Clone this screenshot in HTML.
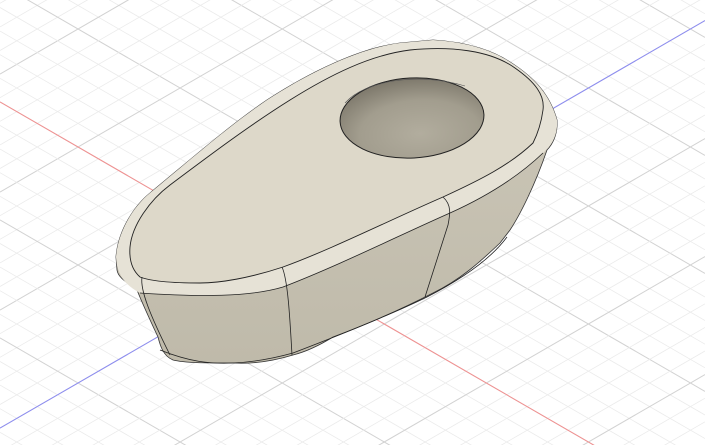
<!DOCTYPE html>
<html><head><style>html,body{margin:0;padding:0;background:#fff;width:705px;height:445px;overflow:hidden}svg{display:block}</style></head>
<body>
<svg width="705" height="445" viewBox="0 0 705 445" xmlns="http://www.w3.org/2000/svg">
<defs>
<linearGradient id="side" x1="0" y1="0" x2="0" y2="1">
<stop offset="0" stop-color="#cdc8b9"/><stop offset="1" stop-color="#bfbaaa"/></linearGradient>
<radialGradient id="hole" cx="0.55" cy="0.7" r="0.7">
<stop offset="0" stop-color="#b2ad9e"/><stop offset="0.6" stop-color="#a29d8e"/><stop offset="1" stop-color="#7d786b"/></radialGradient>
</defs>
<g id="grid"></g>
<g id="axes"></g>
<script>
(function(){
var ns='http://www.w3.org/2000/svg',k=0.578,g=document.getElementById('grid'),a=document.getElementById('axes');
function ln(p,c,sign,col,w){var l=document.createElementNS(ns,'line');
l.setAttribute('x1',0);l.setAttribute('y1',c);l.setAttribute('x2',705);l.setAttribute('y2',c+sign*k*705);
l.setAttribute('stroke',col);l.setAttribute('stroke-width',w);p.appendChild(l);}
for(var i=-40;i<60;i++){var cA=-16.1+i*23.6,cB=74.1+i*23.6;var maj=((i%5)+5)%5==0;
ln(g,cA,1,maj?'#d2d2d2':'#ebebeb',maj?1:0.8);ln(g,cB,-1,maj?'#d2d2d2':'#ebebeb',maj?1:0.8);}
ln(a,101.9,1,'#f29090',1);ln(a,428.1,-1,'#8c8cf2',1);
})();
</script>
<path d="M116,257 C118,230 135,205 150,193 C190,160 230,125 267,100 C310,72 360,48 400,43 L433,40 C470,42 495,52 510,62 C535,78 550,95 557,120 C558,135 552,145 547,150 C535,185 520,215 510,230 L500,243 C480,262 460,280 433,293 C400,310 365,325 333,337 C320,345 305,352 293,355 C270,362 250,364 233,363 C205,363 185,363 173,360 C163,356 160,345 158,337 C150,320 143,305 137,290 C128,283 118,278 117,270 Z" fill="url(#side)" stroke="#333" stroke-width="0.8"/>
<path d="M116,257 C118,230 135,205 150,193 C190,160 230,125 267,100 C310,72 360,48 400,43 L433,40 C470,42 495,52 510,62 C535,78 550,95 557,120 C558,135 552,145 543,153 C520,175 490,195 450,213 C400,235 340,265 283,287 C250,297 200,297 140,293 C125,285 117,275 116,257 Z" fill="#e6e2d6"/>
<path d="M130,247 C132,225 150,200 170,185 C210,155 250,125 290,100 C330,75 370,55 410,50 C450,46 490,50 515,68 C535,82 545,95 543,110 C541,125 537,135 533,143 C510,165 480,180 443,197 C390,220 330,250 283,267 C250,278 220,283 200,283 C170,283 150,281 140,277 C132,270 129,260 130,247 Z" fill="#ddd8c9" stroke="#222" stroke-width="0.9"/>
<path d="M140,293 C200,297 250,297 283,287 C340,265 400,235 450,213 C490,195 520,175 543,153" fill="none" stroke="#222" stroke-width="0.8"/>
<path d="M160,350 C190,362 210,364 233,363 C255,362 275,358 293,353 C340,335 390,315 427,297 C460,280 490,260 507,237" fill="none" stroke="#222" stroke-width="0.8"/>
<path d="M282,267 C288,280 290,320 292,355" fill="none" stroke="#222" stroke-width="0.8"/>
<path d="M443,197 C452,205 450,215 448,225 C440,250 432,275 425,297" fill="none" stroke="#222" stroke-width="0.8"/>
<path d="M142,277 C140,290 150,315 170,355" fill="none" stroke="#222" stroke-width="0.8"/>
<ellipse cx="412" cy="118" rx="72" ry="40" transform="rotate(-3 412 118)" fill="url(#hole)" stroke="#222" stroke-width="1"/>
<path d="M345,103 C365,80 420,72 465,86" fill="none" stroke="#555" stroke-width="0.6"/>
</svg>
</body></html>
